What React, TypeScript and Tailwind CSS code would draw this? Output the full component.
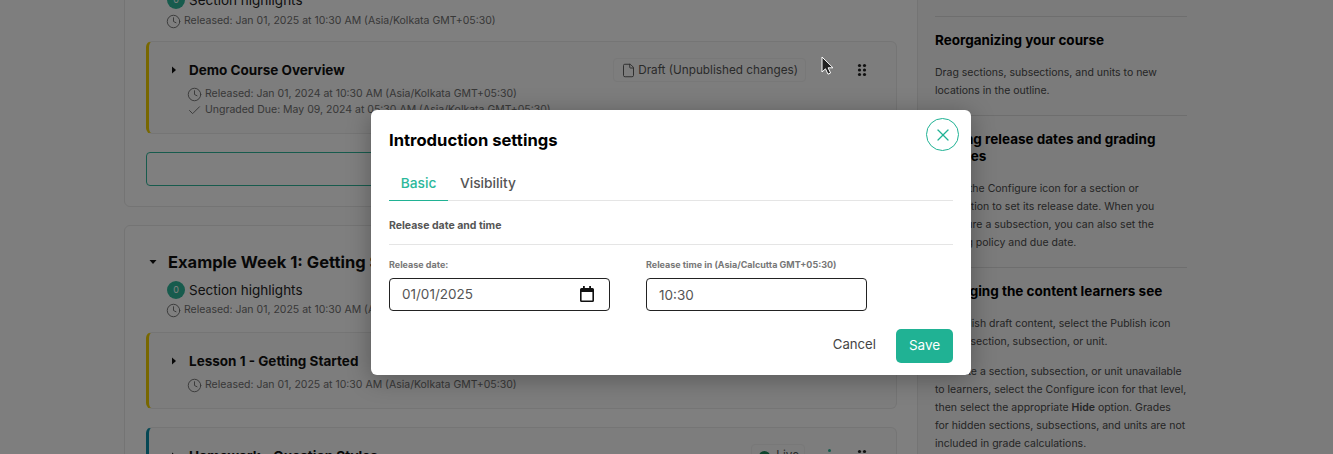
import React from 'react';
import { Check, CheckCircle2, Clock, File, X } from 'lucide-react';

const Grip = ({ className = '' }: { className?: string }) => (
  <svg width="10" height="14" viewBox="0 0 10 14" className={className} fill="currentColor">
    <circle cx="2.5" cy="2.5" r="1.6" />
    <circle cx="7.5" cy="2.5" r="1.6" />
    <circle cx="2.5" cy="7" r="1.6" />
    <circle cx="7.5" cy="7" r="1.6" />
    <circle cx="2.5" cy="11.5" r="1.6" />
    <circle cx="7.5" cy="11.5" r="1.6" />
  </svg>
);

const Caret = ({ open = false }: { open?: boolean }) => (
  <svg width="8" height="8" viewBox="0 0 8 8" fill="#111" className={open ? 'rotate-90' : ''}>
    <path d="M2 0.5 6 4 2 7.5z" />
  </svg>
);

const Calendar = () => (
  <svg width="16" height="17" viewBox="0 0 16 17" className="shrink-0" fill="#111">
    <path d="M4 0h1.8v2h4.4V0H12v2h1.5A1.5 1.5 0 0 1 15 3.5v11a1.5 1.5 0 0 1-1.5 1.5h-11A1.5 1.5 0 0 1 1 14.5v-11A1.5 1.5 0 0 1 2.500 2H4zM2.600 6v8.400h10.800V6z" />
  </svg>
);

const Meta = ({ text, check = false }: { text: string; check?: boolean }) => (
  <div className="flex h-4 items-center gap-[3px] text-[10.5px] text-[#707070] whitespace-nowrap">
    {check ? <Check size={15} strokeWidth={1.5} className="shrink-0" /> : <Clock size={15} strokeWidth={1.5} className="shrink-0" />}
    <span>{text}</span>
  </div>
);

const Highlights = () => (
  <div className="flex h-[18px] items-center gap-1 pl-[21px] text-[13.5px] text-[#222]">
    <span className="flex h-[18px] w-[18px] items-center justify-center rounded-full bg-[#2fb79a] text-[9px] text-white">0</span>
    Section highlights
  </div>
);

const SubCard = ({ title, border, right, children, clip = false }: { title: string; border: string; right?: React.ReactNode; children?: React.ReactNode; clip?: boolean }) => (
  <div className={`rounded-md border border-[#eaeaea] border-l-[3px] bg-[#fafafa] pl-[21px] pr-[29px] pt-[16px] pb-[15px] ${border} ${clip ? 'h-[93px]' : ''}`}>
    <div className="flex h-[24px] items-center">
      <Caret />
      <div className="ml-[11px] text-[13.5px] font-bold text-[#111] whitespace-nowrap">{title}</div>
      <div className="ml-auto flex items-center">{right}</div>
    </div>
    <div className="ml-[17px] mt-[4px]">{children}</div>
  </div>
);

const Hr = () => <div className="h-px w-[252px] bg-[#dcdcdc]" />;

const SideHead = ({ children, className = '' }: { children: React.ReactNode; className?: string }) => (
  <h4 className={`text-[13.5px] font-bold leading-[17px] text-black ${className}`}>{children}</h4>
);

const SideText = ({ children, className = '' }: { children: React.ReactNode; className?: string }) => (
  <p className={`text-[10.5px] leading-[18px] text-[#4a4a4a] ${className}`}>{children}</p>
);

export default function App() {
  return (
    <div className="relative h-[454px] w-[1333px] overflow-hidden bg-[#fdfdfd] font-['Inter',sans-serif]">
      {/* page behind the modal, scrolled down a bit */}
      <div className="-mt-[65px] flex pl-[124px]">
        <div className="flex w-[794px] shrink-0 flex-col gap-[18px]">
          <section className="h-[272px] rounded-md border border-[#e8e8e8] bg-white pl-[21px] pr-[20px] pt-[55px]">
            <Highlights />
            <div className="mt-[4px] pl-[20px]"><Meta text="Released: Jan 01, 2025 at 10:30 AM (Asia/Kolkata GMT+05:30)" /></div>
            <div className="mt-[12px]">
              <SubCard
                clip
                title="Demo Course Overview"
                border="border-l-[#f0cf00]"
                right={
                  <>
                    <span className="flex h-6 items-center gap-[2px] rounded border border-[#f0f0f0] bg-[#fbfbfb] px-[7px] pt-px text-[11.75px] text-[#555]">
                      <File size={15} strokeWidth={1.5} /> Draft (Unpublished changes)
                    </span>
                    <Grip className="ml-[51px] text-[#222]" />
                  </>
                }
              >
                <Meta text="Released: Jan 01, 2024 at 10:30 AM (Asia/Kolkata GMT+05:30)" />
                <Meta check text="Ungraded Due: May 09, 2024 at 05:30 AM (Asia/Kolkata GMT+05:30)" />
              </SubCard>
            </div>
            <div className="mt-[18px] h-[34px] rounded border border-[#2fb79a] bg-white" />
          </section>

          <section className="rounded-md border border-[#e8e8e8] bg-white pl-[21px] pr-[20px] pt-[25px] pb-8">
            <div className="flex h-[22px] items-center gap-[11px] pl-[3px] text-[16.5px] font-bold text-[#111] whitespace-nowrap">
              <Caret open />
              Example Week 1: Getting Started
            </div>
            <div className="mt-[8px]"><Highlights /></div>
            <div className="mt-[3px] pl-[20px]"><Meta text="Released: Jan 01, 2025 at 10:30 AM (Asia/Kolkata GMT+05:30)" /></div>
            <div className="mt-[14px] flex flex-col gap-[18px]">
              <SubCard title="Lesson 1 - Getting Started" border="border-l-[#f0cf00]">
                <Meta text="Released: Jan 01, 2025 at 10:30 AM (Asia/Kolkata GMT+05:30)" />
              </SubCard>
              <SubCard
                title="Homework - Question Styles"
                border="border-l-[#0a8fa8]"
                right={
                  <>
                    <span className="flex h-6 items-center gap-[4px] rounded border border-[#f0f0f0] bg-[#fbfbfb] px-[5px] text-[11.75px] text-[#555]">
                      <CheckCircle2 size={15} className="fill-[#1d8a5a] text-white" /> Live
                    </span>
                    <span className="ml-[19px] flex w-[10px] flex-col items-center gap-[3px]">
                      <i className="h-[3px] w-[3px] rounded-full bg-[#2fb79a]" />
                      <i className="h-[3px] w-[3px] rounded-full bg-[#2fb79a]" />
                      <i className="h-[3px] w-[3px] rounded-full bg-[#2fb79a]" />
                    </span>
                    <Grip className="ml-[23px] text-[#222]" />
                  </>
                }
              />
            </div>
          </section>
        </div>

        <aside className="w-[415px] bg-[#f6f6f6] pl-[17px] pt-[81px]">
          <Hr />
          <SideHead className="mt-[15px]">Reorganizing your course</SideHead>
          <SideText className="mt-[15px]">
            Drag sections, subsections, and units to new
            <br />
            locations in the outline.
          </SideText>
          <div className="mt-[15px]"><Hr /></div>
          <SideHead className="mt-[15px] w-[252px]">Setting release dates and grading policies</SideHead>
          <SideText className="mt-[15px]">
            Select the Configure icon for a section or
            <br />
            subsection to set its release date. When you
            <br />
            configure a subsection, you can also set the
            <br />
            grading policy and due date.
          </SideText>
          <div className="mt-[15px]"><Hr /></div>
          <SideHead className="mt-[15px]">Changing the content learners see</SideHead>
          <SideText className="mt-[15px]">
            To publish draft content, select the Publish icon
            <br />
            for the section, subsection, or unit.
          </SideText>
          <SideText className="mt-3">
            To make a section, subsection, or unit unavailable
            <br />
            to learners, select the Configure icon for that level,
            <br />
            then select the appropriate <b className="font-semibold">Hide</b> option. Grades
            <br />
            for hidden sections, subsections, and units are not
            <br />
            included in grade calculations.
          </SideText>
        </aside>
      </div>

      {/* overlay */}
      <div className="absolute inset-0 bg-black/50" />

      {/* modal */}
      <div className="absolute left-[371px] top-[110px] h-[265px] w-[600px] rounded-md bg-white px-[18px] pt-[20px] shadow-[0_4px_24px_rgba(0,0,0,0.3)]">
        <button className="absolute right-[12px] top-[8px] flex h-[33px] w-[33px] items-center justify-center rounded-full border-[1.5px] border-[#20b294] text-[#20b294]">
          <X size={20} strokeWidth={1.5} />
        </button>
        <h2 className="text-[16.6px] font-bold leading-[21px] text-black">Introduction settings</h2>
        <div className="mt-[16px] flex h-[34px] items-center border-b border-[#e5e5e5] text-[13.75px] font-medium text-[#555]">
          <span className="flex h-[34px] w-[59px] items-center justify-center border-b-[1.5px] border-[#20b294] text-[#2bb89b]">Basic</span>
          <span className="px-3">Visibility</span>
        </div>
        <div className="mt-[18px] text-[10.5px] font-bold leading-[13px] text-[#555]">Release date and time</div>
        <div className="mt-3 h-px bg-[#e5e5e5]" />
        <div className="mt-[14px] flex gap-9">
          <label className="block w-[221px]">
            <span className="block text-[9px] font-bold leading-[11px] text-[#777]">Release date:</span>
            <div className="mt-[8px] flex h-[33px] items-center rounded border border-[#222] pl-3 pr-[14px]">
              <input type="text" defaultValue="01/01/2025" className="w-full min-w-0 text-[13.5px] text-[#555] outline-none" />
              <Calendar />
            </div>
          </label>
          <label className="block w-[221px]">
            <span className="block text-[9px] font-bold leading-[11px] text-[#777]">Release time in (Asia/Calcutta GMT+05:30)</span>
            <input
              type="text"
              defaultValue="10:30"
              className="mt-[8px] h-[33px] w-full rounded border border-[#222] px-3 text-[13.5px] text-[#555]"
            />
          </label>
        </div>
        <div className="mt-[18px] flex items-center justify-end gap-5">
          <button className="pb-[2px] text-[13.2px] text-[#454545]">Cancel</button>
          <button className="h-[34px] w-[57px] rounded-[5px] bg-[#20b294] pb-[2px] text-[13.5px] text-white">Save</button>
        </div>
      </div>

      {/* mouse pointer */}
      <svg width="14" height="20" viewBox="0 0 14 20" className="absolute left-[821px] top-[56px]">
        <path d="M1 1v15l3.5-3.2 2.5 5.4 2.6-1.2-2.5-5.2H12z" fill="#222" stroke="#fff" strokeWidth="1" />
      </svg>
    </div>
  );
}
